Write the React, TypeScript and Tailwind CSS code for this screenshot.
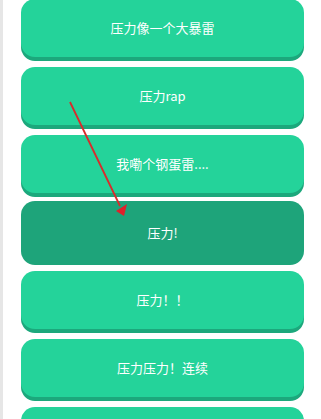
import React from 'react';

const items = [
  { label: '压力像一个大暴雷', pressed: false },
  { label: '压力rap', pressed: false },
  { label: '我嘞个钢蛋雷....', pressed: false },
  { label: '压力!', pressed: true },
  { label: '压力！！', pressed: false },
  { label: '压力压力！连续', pressed: false },
  { label: '压力压力压力', pressed: false },
];

export default function App() {
  return (
    <div
      className="relative h-[419px] w-[321px] overflow-hidden bg-white"
      style={{ fontFamily: '"Noto Sans CJK SC", "Noto Sans", sans-serif' }}
    >
      <div className="flex h-full">
        {/* left edge strip */}
        <div className="w-[3px] shrink-0 bg-[#e6e6e6]" />
        <div className="flex flex-1 flex-col pl-[18px] pr-[17px] -mt-[1px]">
          {items.map((item) =>
            item.pressed ? (
              <button
                key={item.label}
                className="-mt-[2px] mb-[6px] flex h-[64px] w-full shrink-0 items-center justify-center rounded-[14px] bg-[#1ea47a] text-[13px] text-white"
              >
                {item.label}
              </button>
            ) : (
              <button
                key={item.label}
                className="mb-[10px] flex h-[58px] w-full shrink-0 items-center justify-center rounded-[14px] bg-[#24d39a] text-[13px] text-white shadow-[0_4px_0_#1ca87c]"
              >
                {item.label}
              </button>
            )
          )}
        </div>
      </div>

      {/* annotation arrow */}
      <svg className="pointer-events-none absolute left-0 top-0" width="321" height="419">
        <line x1="70" y1="102" x2="120" y2="206" stroke="#d92b2b" strokeWidth="1.8" />
        <polygon points="116,211 127,204 124,216" fill="#e0202a" />
      </svg>
    </div>
  );
}
